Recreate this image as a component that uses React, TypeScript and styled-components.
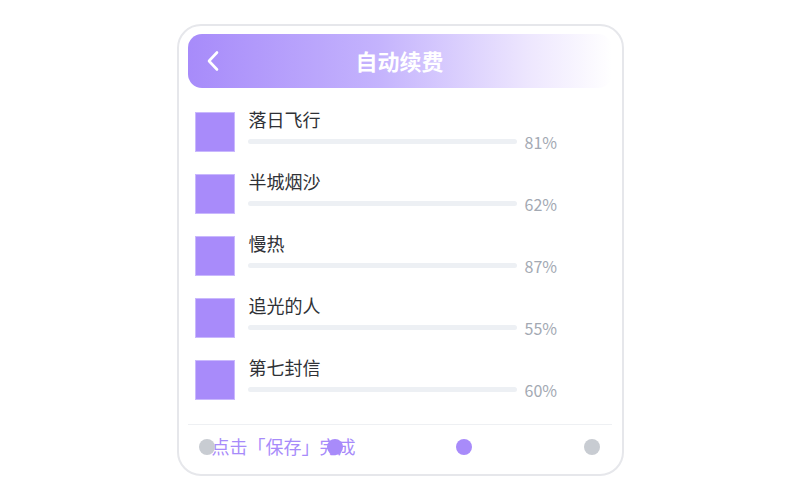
import React from "react";
import styled, { createGlobalStyle } from "styled-components";

const GlobalStyle = createGlobalStyle`
  html, body {
    margin: 0;
    padding: 0;
    background: #ffffff;
    font-family: "Noto Sans CJK SC", "Noto Sans", sans-serif;
  }
`;

const Page = styled.div`
  display: flex;
  justify-content: center;
  padding-top: 24px;
`;

const Card = styled.div`
  width: 447px;
  height: 452px;
  box-sizing: border-box;
  border: 2px solid #e6e7eb;
  border-radius: 24px;
  padding: 8px 10px 0 9px;
  display: flex;
  flex-direction: column;
`;

const Header = styled.div`
  height: 54px;
  border-radius: 14px;
  background: linear-gradient(90deg, #a78bfa 0%, #c4b3fd 45%, #ede6fe 80%, #ffffff 100%);
  display: grid;
  grid-template-columns: 60px 1fr 60px;
  align-items: center;
`;

const Back = styled.div`
  padding-left: 18px;
  display: flex;
  align-items: center;
`;

const Title = styled.h1`
  margin: -2px 0 0;
  text-align: center;
  color: #ffffff;
  font-size: 22px;
  font-weight: 700;
  line-height: 26px;
`;

const List = styled.div`
  margin-top: 24px;
  display: flex;
  flex-direction: column;
  gap: 22px;
  padding-left: 7px;
`;

const Row = styled.div`
  display: flex;
  gap: 13px;
`;

const Cover = styled.div`
  width: 40px;
  height: 40px;
  box-sizing: border-box;
  background: #a88bfa;
  border: 1px solid #c9b8fd;
`;

const Info = styled.div`
  display: flex;
  flex-direction: column;
  gap: 11px;
`;

const Name = styled.div`
  font-size: 18px;
  line-height: 18px;
  margin-top: -2px;
  color: #2f3136;
  padding-left: 1px;
`;

const Meter = styled.div`
  display: flex;
  align-items: flex-start;
  gap: 8px;
  height: 5px;
`;

const Track = styled.div`
  width: 269px;
  height: 5px;
  border-radius: 3px;
  background: #edf0f4;
`;

const Percent = styled.span`
  font-size: 16px;
  line-height: 16px;
  margin-top: -5px;
  color: #a3a9b3;
`;

const Footer = styled.div`
  margin-top: 24px;
  border-top: 1px solid #eef0f3;
  position: relative;
  height: 44px;
  display: flex;
  align-items: center;
  padding-left: 24px;
`;

const Hint = styled.span`
  font-size: 18px;
  line-height: 20px;
  margin-top: -2px;
  color: #a78bfa;
`;

const Dots = styled.div`
  position: absolute;
  left: 11px;
  right: 11px;
  top: 14px;
  display: flex;
  justify-content: space-between;
`;

const Dot = styled.span<{ active: boolean }>`
  width: 16px;
  height: 16px;
  border-radius: 50%;
  background: ${(p) => (p.active ? "#a88bfa" : "#c8ccd2")};
`;

const songs = [
  { name: "落日飞行", pct: 81 },
  { name: "半城烟沙", pct: 62 },
  { name: "慢热", pct: 87 },
  { name: "追光的人", pct: 55 },
  { name: "第七封信", pct: 60 },
];

const App: React.FC = () => {
  return (
    <>
      <GlobalStyle />
      <Page>
        <Card>
          <Header>
            <Back>
              <svg width="14" height="22" viewBox="0 0 14 22">
                <polyline
                  points="11,2.5 3,11 11,19.5"
                  fill="none"
                  stroke="#ffffff"
                  strokeWidth="2.6"
                  strokeLinecap="round"
                  strokeLinejoin="round"
                />
              </svg>
            </Back>
            <Title>自动续费</Title>
            <span />
          </Header>
          <List>
            {songs.map((s) => (
              <Row key={s.name}>
                <Cover />
                <Info>
                  <Name>{s.name}</Name>
                  <Meter>
                    <Track />
                    <Percent>{s.pct}%</Percent>
                  </Meter>
                </Info>
              </Row>
            ))}
          </List>
          <Footer>
            <Hint>点击「保存」完成</Hint>
            <Dots>
              <Dot active={false} />
              <Dot active />
              <Dot active />
              <Dot active={false} />
            </Dots>
          </Footer>
        </Card>
      </Page>
    </>
  );
};

export default App;
